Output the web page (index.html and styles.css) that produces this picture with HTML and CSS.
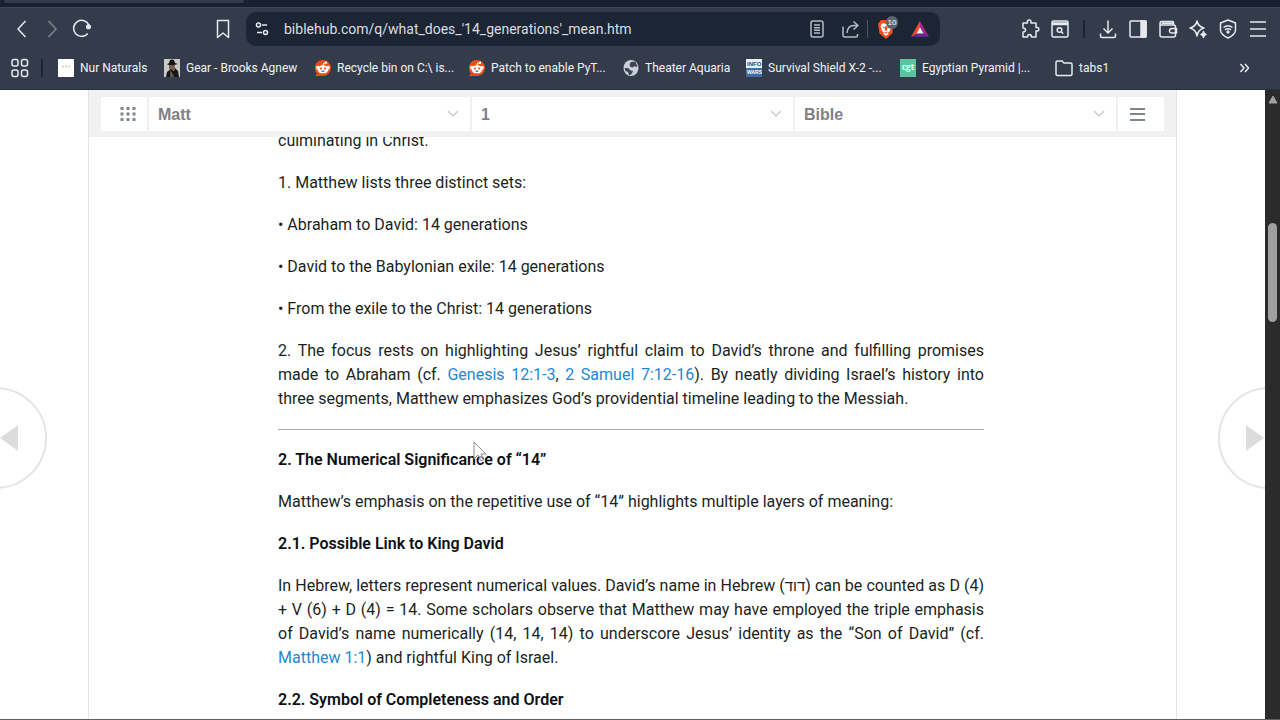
FILE: index.html
```html
<!DOCTYPE html>
<html lang="en">
<head>
    <meta charset="UTF-8">
    <meta name="viewport" content="width=device-width, initial-scale=1.0">
    <title>What does '14 generations' mean?</title>
    <link rel="stylesheet" href="styles.css">
</head>
<body>
    <div class="browser">
        <div class="tab-strip"><div class="tab"></div></div>

        <div class="chrome">
            <div class="toolbar">
                <div class="tools">
                    <button class="tool" aria-label="Back"><svg viewBox="0 0 20 20"><path d="M13.5 2 6 10l7.500 8"/></svg></button>
                    <button class="tool dim" aria-label="Forward"><svg viewBox="0 0 20 20"><path d="M6.500 2 14 10l-7.500 8"/></svg></button>
                    <button class="tool" aria-label="Reload"><svg viewBox="0 0 20 20"><path d="M15.800 14.500A8 8 0 1 1 17 6.200"/><circle class="solid" cx="16.500" cy="7.800" r="1.800"/></svg></button>
                </div>
                <button class="tool bookmark" aria-label="Bookmark this page"><svg viewBox="0 0 20 20"><path d="M4.500 1.500h11v17L10 14l-5.500 4.500z"/></svg></button>
                <div class="address">
                    <button class="tool site" aria-label="Site settings"><svg viewBox="0 0 20 20"><circle cx="6.500" cy="6" r="2"/><path d="M10 6h5M5 13.500h5"/><circle cx="13.500" cy="13.500" r="2"/></svg></button>
                    <input class="url" type="text" aria-label="Address" value="biblehub.com/q/what_does_'14_generations'_mean.htm">
                    <button class="tool muted" aria-label="Reading mode"><svg viewBox="0 0 20 20"><rect x="4" y="2" width="12" height="16" rx="2"/><path d="M7 6h6M7 8.700h6M7 11.300h6M7 14h6"/></svg></button>
                    <button class="tool muted share" aria-label="Share"><svg viewBox="0 0 20 20"><path d="M2 7.500V16q0 2 2 2h11q1.500 0 1.500-1.500V15M6 14q.5-7.500 7-7.500h3.500M12.500 2.500l4.500 4-4.500 4"/></svg></button>
                    <span class="thin-line"></span>
                    <button class="tool shield" aria-label="Shields">
                        <svg viewBox="0 0 20 20" class="flat"><path fill="#f1501f" d="M5 1h9l3 3-.5 10L10 20l-6.500-5.500L2 5z"/><path fill="#fff" d="m5.500 5 2-.8 2.500.8 2.500-.8 2 .8 1 2.500-2 5-1.500 1 .5 1.500-2.500 1.800L7.500 15l.5-1.500-1.500-1-2-5z"/><path fill="#f1501f" d="m6 7.500 2.800.7-.6 1.500zM14 7.500l-2.800.7.6 1.500zM9.200 7h1.600l.4 4-1.200 1-1.200-1zM7.800 12.500l2.200 1 2.200-1-2.200 2.600z"/></svg>
                        <span class="count">10</span>
                    </button>
                    <button class="tool" aria-label="Rewards"><svg viewBox="0 0 20 20" class="flat"><path fill="#ff4b24" d="M10 2 1 18l6-3.500L10 9z"/><path fill="#a3278f" d="m10 2 9 16-6-3.500L10 9z"/><path fill="#5b2a91" d="M1 18h18l-6-3.500H7z"/><path fill="#fff" d="m10 8.500 3.500 6h-7z"/></svg></button>
                </div>
                <div class="tools">
                    <button class="tool" aria-label="Extensions"><svg viewBox="0 0 20 20"><path d="M3 4h4.500q-.7-3 1.700-3t1.700 3H16v4.500q2.800-.5 2.800 1.700T16 12v6h-4.500q0-2.500-2-2.500t-2 2.500H3v-5q2.500 0 2.500-2T3 9z"/></svg></button>
                    <button class="tool" aria-label="Search tabs"><svg viewBox="0 0 20 20"><rect x="2" y="2" width="16" height="16" rx="1.500"/><path d="M2 4h16M2 5.500h16"/><circle cx="9.500" cy="11" r="2.300"/><path d="m11.200 12.800 2 2"/></svg></button>
                    <span class="divider"></span>
                    <button class="tool" aria-label="Downloads"><svg viewBox="0 0 20 20"><path d="M10 1.500v12M5.500 9.500l4.500 4.500 4.500-4.500M2.500 14.500V17q0 1.500 1.500 1.500h12q1.500 0 1.500-1.500v-2.500"/></svg></button>
                    <button class="tool" aria-label="Sidebar"><svg viewBox="0 0 20 20"><rect x="2" y="2" width="16" height="16" rx="1"/><path class="solid" d="M13 2h5v16h-5z"/></svg></button>
                    <button class="tool" aria-label="Wallet"><svg viewBox="0 0 20 20"><path d="M15.500 6V3.500q0-1-1-1H3.500Q2 2.500 2 4.200V16q0 2 2 2h11.500q2 0 2-2V8q0-2-2-2H4Q2 6 2 4.200M3.500 4.200h12M18.500 9.500H14q-2.500 0-2.500 2.300T14 14h4.500z"/></svg></button>
                    <button class="tool" aria-label="Assistant"><svg viewBox="0 0 20 20"><path d="M9 2q1 5.500 7 7-6 1.500-7 8-1-6.500-7-8 6-1.500 7-7z"/><path class="solid" d="M15.500 12.500q.3 2.500 2.500 3-2.200.5-2.500 3-.3-2.500-2.500-3 2.200-.5 2.500-3z"/></svg></button>
                    <button class="tool" aria-label="VPN"><svg viewBox="0 0 20 20"><path d="m10 1 7.500 3v7q0 4.500-7.500 8-7.500-3.500-7.500-8V4z"/><path d="M5.500 8.500q4.500-3.500 9 0M7 10.800q3-2.200 6 0"/><circle class="solid" cx="10" cy="13" r=".9"/></svg></button>
                    <button class="tool" aria-label="Menu"><svg viewBox="0 0 20 20"><path d="M2 3h16M2 10h16M2 17h16"/></svg></button>
                </div>
            </div>

            <div class="bookmarks">
                <button class="tool" aria-label="All bookmarks"><svg viewBox="0 0 20 20"><rect x="2" y="1.500" width="6" height="6.500" rx="2"/><rect x="11.500" y="1.500" width="6" height="6.500" rx="2"/><rect x="2" y="12" width="6" height="6.500" rx="2"/><rect x="11.500" y="12" width="6" height="6.500" rx="2"/></svg></button>
                <span class="divider"></span>
                <nav class="links">
                    <a href="#"><svg viewBox="0 0 16 18"><path fill="#fff" d="M0 0h16v18H0z"/><path stroke="#ddd3c8" stroke-width="2" stroke-dasharray="2 1" d="M4 7.500h8"/></svg>Nur Naturals</a>
                    <a href="#"><svg viewBox="0 0 16 18"><path fill="#c9c9c6" d="M0 0h16v18H0z"/><path fill="#7b5f50" d="M5 5h6v5l-3 2-3-2z"/><path fill="#161618" d="M3 5.500 5 4l1-3q2-1 4 0l1 3 3 1q-5 2-11 .5zM2 18l1-5 4-3 3 2 1-3 3 3 1 6z"/><path fill="#56584c" d="m6 11 3 4 1 3H6z"/></svg>Gear - Brooks Agnew</a>
                    <a href="#"><svg viewBox="0 0 16 18"><path fill="#f04a18" d="M8 1a8 8 0 1 1 0 16H0l2-2.500A8 8 0 0 1 8 1z"/><circle cx="2.800" cy="8.500" r="1.700" fill="#fff"/><circle cx="13.200" cy="8.500" r="1.700" fill="#fff"/><ellipse cx="8" cy="10.300" rx="5.500" ry="4" fill="#fff"/><circle cx="11" cy="3.800" r="1.200" fill="#fff"/><path stroke="#fff" fill="none" d="m8 7 .6-3L11 4"/><circle cx="5.900" cy="9.500" r="1.100" fill="#f04a18"/><circle cx="10.100" cy="9.500" r="1.100" fill="#f04a18"/><path fill="#33292a" d="M5.800 11.700h4.400Q8 14 5.800 11.700z"/></svg>Recycle bin on C:\ is...</a>
                    <a href="#"><svg viewBox="0 0 16 18"><path fill="#f04a18" d="M8 1a8 8 0 1 1 0 16H0l2-2.500A8 8 0 0 1 8 1z"/><circle cx="2.800" cy="8.500" r="1.700" fill="#fff"/><circle cx="13.200" cy="8.500" r="1.700" fill="#fff"/><ellipse cx="8" cy="10.300" rx="5.500" ry="4" fill="#fff"/><circle cx="11" cy="3.800" r="1.200" fill="#fff"/><path stroke="#fff" fill="none" d="m8 7 .6-3L11 4"/><circle cx="5.900" cy="9.500" r="1.100" fill="#f04a18"/><circle cx="10.100" cy="9.500" r="1.100" fill="#f04a18"/><path fill="#33292a" d="M5.800 11.700h4.400Q8 14 5.800 11.700z"/></svg>Patch to enable PyT...</a>
                    <a href="#"><svg viewBox="0 0 16 18"><ellipse cx="8" cy="9" rx="7.500" ry="8" fill="#c9ced8"/><path fill="#3b4352" d="m8 3 4-.5L14.500 7 13 8l-2-1-1 1.500L7.500 8l-1-2.500zM1.500 9l4 .2 2 2.300 2.500.5-1 2.500-2 1.500H6l-1-3-2.500-1z"/></svg>Theater Aquaria</a>
                    <a href="#"><svg viewBox="0 0 16 18"><path fill="#e8f0f8" d="M0 0h16v18H0z"/><path fill="#3c6ea8" d="M0 9h16v9H0z"/><text class="info" x="1" y="7" fill="#24508a">INFO</text><text class="info wars" x="1" y="15" fill="#fff">WARS</text></svg>Survival Shield X-2 -...</a>
                    <a href="#"><svg viewBox="0 0 16 18"><path fill="#5cc4a0" d="M0 0h16v18H0z"/><text class="cgt" x="2" y="11">cgt</text></svg>Egyptian Pyramid |...</a>
                    <a href="#" class="folder"><svg viewBox="0 0 18 18"><path fill="none" stroke="#e6e9ef" stroke-width="1.500" d="M1 15V3.500Q1 2 2.500 2H7l2 2h6.500Q17 4 17 5.500V15q0 1.500-1.500 1.500h-13Q1 16.500 1 15z"/></svg>tabs1</a>
                </nav>
                <button class="tool more" aria-label="More bookmarks"><svg viewBox="0 0 20 20"><path d="m6.500 6 3.500 4-3.500 4M11 6l3.500 4-3.500 4"/></svg></button>
            </div>
        </div>

        <div class="viewport">
            <main class="page">
                <div class="site-nav">
                    <form class="picker">
                        <button type="button" class="nav-btn" aria-label="Browse"><svg viewBox="0 0 16 16"><path stroke-width="3" stroke-dasharray="3 3" d="M.5 2.500h16M.5 8h16M.5 13.500h16"/></svg></button>
                        <select aria-label="Book"><option>Matt</option></select>
                        <select aria-label="Chapter"><option>1</option></select>
                        <select aria-label="Version"><option>Bible</option></select>
                        <button type="button" class="nav-btn" aria-label="Menu"><svg viewBox="0 0 16 16"><path stroke-width="2" d="M1 3h15M1 8h15M1 14h15"/></svg></button>
                    </form>
                </div>
                <article class="article">
                    <p>culminating in Christ.</p>
                    <p>1. Matthew lists three distinct sets:</p>
                    <p>• Abraham to David: 14 generations</p>
                    <p>• David to the Babylonian exile: 14 generations</p>
                    <p>• From the exile to the Christ: 14 generations</p>
                    <p>2. The focus rests on highlighting Jesus’ rightful claim to David’s throne and fulfilling promises made to Abraham (cf. <a href="#">Genesis 12:1-3</a>, <a href="#">2 Samuel 7:12-16</a>). By neatly dividing Israel’s history into three segments, Matthew emphasizes God’s providential timeline leading to the Messiah.</p>
                    <hr>
                    <h2>2. The Numerical Significance of “14”</h2>
                    <p>Matthew’s emphasis on the repetitive use of “14” highlights multiple layers of meaning:</p>
                    <h3>2.1. Possible Link to King David</h3>
                    <p>In Hebrew, letters represent numerical values. David’s name in Hebrew (<span class="hebrew" lang="he">דוד</span>) can be counted as D (4) + V (6) + D (4) = 14. Some scholars observe that Matthew may have employed the triple emphasis of David’s name numerically (14, 14, 14) to underscore Jesus’ identity as the “Son of David” (cf. <a href="#">Matthew 1:1</a>) and rightful King of Israel.</p>
                    <h3>2.2. Symbol of Completeness and Order</h3>
                </article>
            </main>
            <a href="#" class="turn prev" aria-label="Previous"><svg viewBox="0 0 18 26"><path d="M18 0v26L0 13z"/></svg></a>
            <a href="#" class="turn next" aria-label="Next"><svg viewBox="0 0 18 26"><path d="M0 0v26l18-13z"/></svg></a>
            <div class="scrollbar">
                <svg class="scroll-up" viewBox="0 0 10 9"><path d="M5 1 9 8H1z"/></svg>
                <div class="thumb"></div>
            </div>
            <svg class="cursor" viewBox="0 0 14 22"><path d="M1 1v17l4-4 3 6 2.500-1-2.500-6h5z"/></svg>
        </div>
    </div>
</body>
</html>
```
FILE: styles.css
```css
* {
    box-sizing: border-box;
}

body {
    margin: 0;
    font-family: Roboto, "Open Sans", sans-serif;
    background: #fff;
}

.browser {
    display: flex;
    flex-direction: column;
    height: 100vh;
    overflow: hidden;
    border-bottom: 1px solid #5d5f63;
}

/* Browser frame */
.tab-strip {
    height: 7px;
    background: #162031;
}

.tab {
    width: 240px;
    height: 3px;
    margin-left: 4px;
    background: #343c4b;
    border-radius: 0 0 6px 6px;
}

.chrome {
    background: #343c4b;
    border-top: 1px solid #3f4756;
    border-bottom: 1px solid #2a3040;
    height: 83px;
    padding: 3px 12px 0;
}

.toolbar {
    display: flex;
    align-items: center;
    height: 36px;
}

.tools {
    display: flex;
    align-items: center;
    gap: 10px;
}

.tool {
    position: relative;
    flex: none;
    width: 20px;
    height: 20px;
    padding: 0;
    border: none;
    background: none;
    color: #e6e9ef;
    cursor: pointer;
}

.tool svg {
    display: block;
    width: 20px;
    height: 20px;
    fill: none;
    stroke: currentColor;
    stroke-width: 1.5;
    stroke-linejoin: round;
}

.tool svg.flat {
    stroke: none;
}

.tool .solid {
    fill: currentColor;
}

.dim {
    color: #7d8490;
}

.muted {
    color: #b4bac5;
}

.bookmark {
    margin-left: auto;
}

.address {
    display: flex;
    align-items: center;
    flex: 0 1 694px;
    height: 34px;
    margin: 0 80px 0 13px;
    padding: 0 10px 0 6px;
    background: #1c2533;
    border-radius: 10px;
}

.url {
    flex: 1;
    min-width: 0;
    margin-left: 10px;
    padding: 0 2px;
    border: none;
    outline: none;
    background: none;
    color: #d9dde5;
    font-family: inherit;
    font-size: 14px;
}

.share {
    margin: 0 6px 0 14px;
}

.thin-line {
    width: 1px;
    height: 18px;
    background: #4c5463;
}

.shield {
    margin: 0 14px 0 8px;
}

.count {
    position: absolute;
    top: -3px;
    left: 10px;
    width: 12px;
    height: 13px;
    border-radius: 6px;
    background: #5d6470;
    color: #fff;
    font-size: 8px;
    line-height: 13px;
    text-align: center;
}

.divider {
    width: 2px;
    height: 18px;
    margin: 0 3px;
    background: #1c2533;
}

.bookmarks {
    display: flex;
    align-items: center;
    height: 42px;
    margin-left: -2px;
}

.bookmarks .divider {
    margin: 0 15px 0 11px;
}

.links {
    flex: 1;
    display: grid;
    grid-template-columns: 106px 151px 154px 154px 123px 154px 155px auto;
}

.links a {
    display: flex;
    align-items: center;
    gap: 6px;
    color: #f1f3f6;
    font-size: 12px;
    white-space: nowrap;
    text-decoration: none;
}

.links svg {
    flex: none;
    width: 16px;
    height: 18px;
}

.links .folder svg {
    width: 18px;
}

.more {
    margin-right: 14px;
}

.info {
    font: bold 6px "Liberation Sans", sans-serif;
}

.wars {
    font-size: 5px;
}

.cgt {
    font: bold 8px "Open Sans", sans-serif;
    fill: #fff;
}

/* Page */
.viewport {
    position: relative;
    flex: 1;
    display: flex;
    min-height: 0;
    overflow: hidden;
}

.page {
    flex: 1;
    margin: 0 88px;
    border-left: 1px solid #e4e4e4;
    border-right: 1px solid #e4e4e4;
}

.site-nav {
    position: relative;
    z-index: 1;
    padding: 7px 12px 6px;
    background: #f1f1f1;
}

.picker {
    display: flex;
    height: 34px;
    background: #fff;
}

.nav-btn {
    width: 46px;
    padding: 0;
    border: none;
    background: none;
}

.nav-btn svg {
    width: 16px;
    height: 16px;
    margin: 3px 0 0 8px;
    fill: none;
    stroke: #808589;
}

.nav-btn:last-child svg {
    margin-left: 0;
    margin-right: 8px;
}

.picker select {
    flex: 1;
    min-width: 0;
    padding: 0 9px;
    appearance: none;
    border: none;
    border-left: 2px solid #f1f1f1;
    border-radius: 0;
    background: #fff url("data:image/svg+xml,%3Csvg xmlns='http://www.w3.org/2000/svg' width='12' height='8'%3E%3Cpath d='M1 1l5 5 5-5' fill='none' stroke='%23ccc' stroke-width='1.5'/%3E%3C/svg%3E") no-repeat right 11px center;
    color: #808085;
    font: bold 16px "Liberation Sans", Arial, sans-serif;
}

.picker select:last-of-type {
    border-right: 2px solid #f1f1f1;
}

.article {
    margin-top: -8px;
    padding: 0 192px 0 189px;
    color: #1b1f22;
    font-family: Roboto, sans-serif;
    font-size: 16px;
    line-height: 24px;
    text-align: justify;
}

.article p,
.article h2,
.article h3 {
    margin: 0 0 18px;
    font-size: inherit;
}

.article h2,
.article h3 {
    color: #0c1116;
    font-weight: 600;
}

.article hr {
    height: 1px;
    margin: 0 0 18px;
    border: none;
    background: #aaa;
}

.article a {
    color: #1f88d0;
    text-decoration: none;
}

.hebrew {
    font-family: "Liberation Sans", sans-serif;
    font-size: 15px;
    line-height: 1;
}

/* Round page-turn buttons at the edges */
.turn {
    position: absolute;
    top: 297px;
    display: flex;
    align-items: center;
    width: 102px;
    height: 102px;
    border: 2px solid #e4e4e4;
    border-radius: 50%;
}

.turn svg {
    width: 18px;
    height: 26px;
    fill: #dcdcdc;
}

.prev {
    left: -55px;
    justify-content: flex-end;
    padding-right: 27px;
}

.next {
    right: -40px;
    padding-left: 26px;
}

.scrollbar {
    position: relative;
    flex: none;
    width: 15px;
    padding: 5px 3px 0;
    background: #2b2b2b;
}

.scroll-up {
    display: block;
    width: 10px;
    height: 9px;
    fill: #a0a0a0;
    stroke: #a0a0a0;
    stroke-linejoin: round;
}

.thumb {
    width: 9px;
    height: 99px;
    margin-top: 119px;
    border-radius: 5px;
    background: #a0a0a0;
}

.cursor {
    position: absolute;
    top: 351px;
    left: 473px;
    width: 14px;
    height: 22px;
    fill: rgba(255, 255, 255, 0.6);
    stroke: #8a8a8a;
    stroke-width: 1;
}
```
